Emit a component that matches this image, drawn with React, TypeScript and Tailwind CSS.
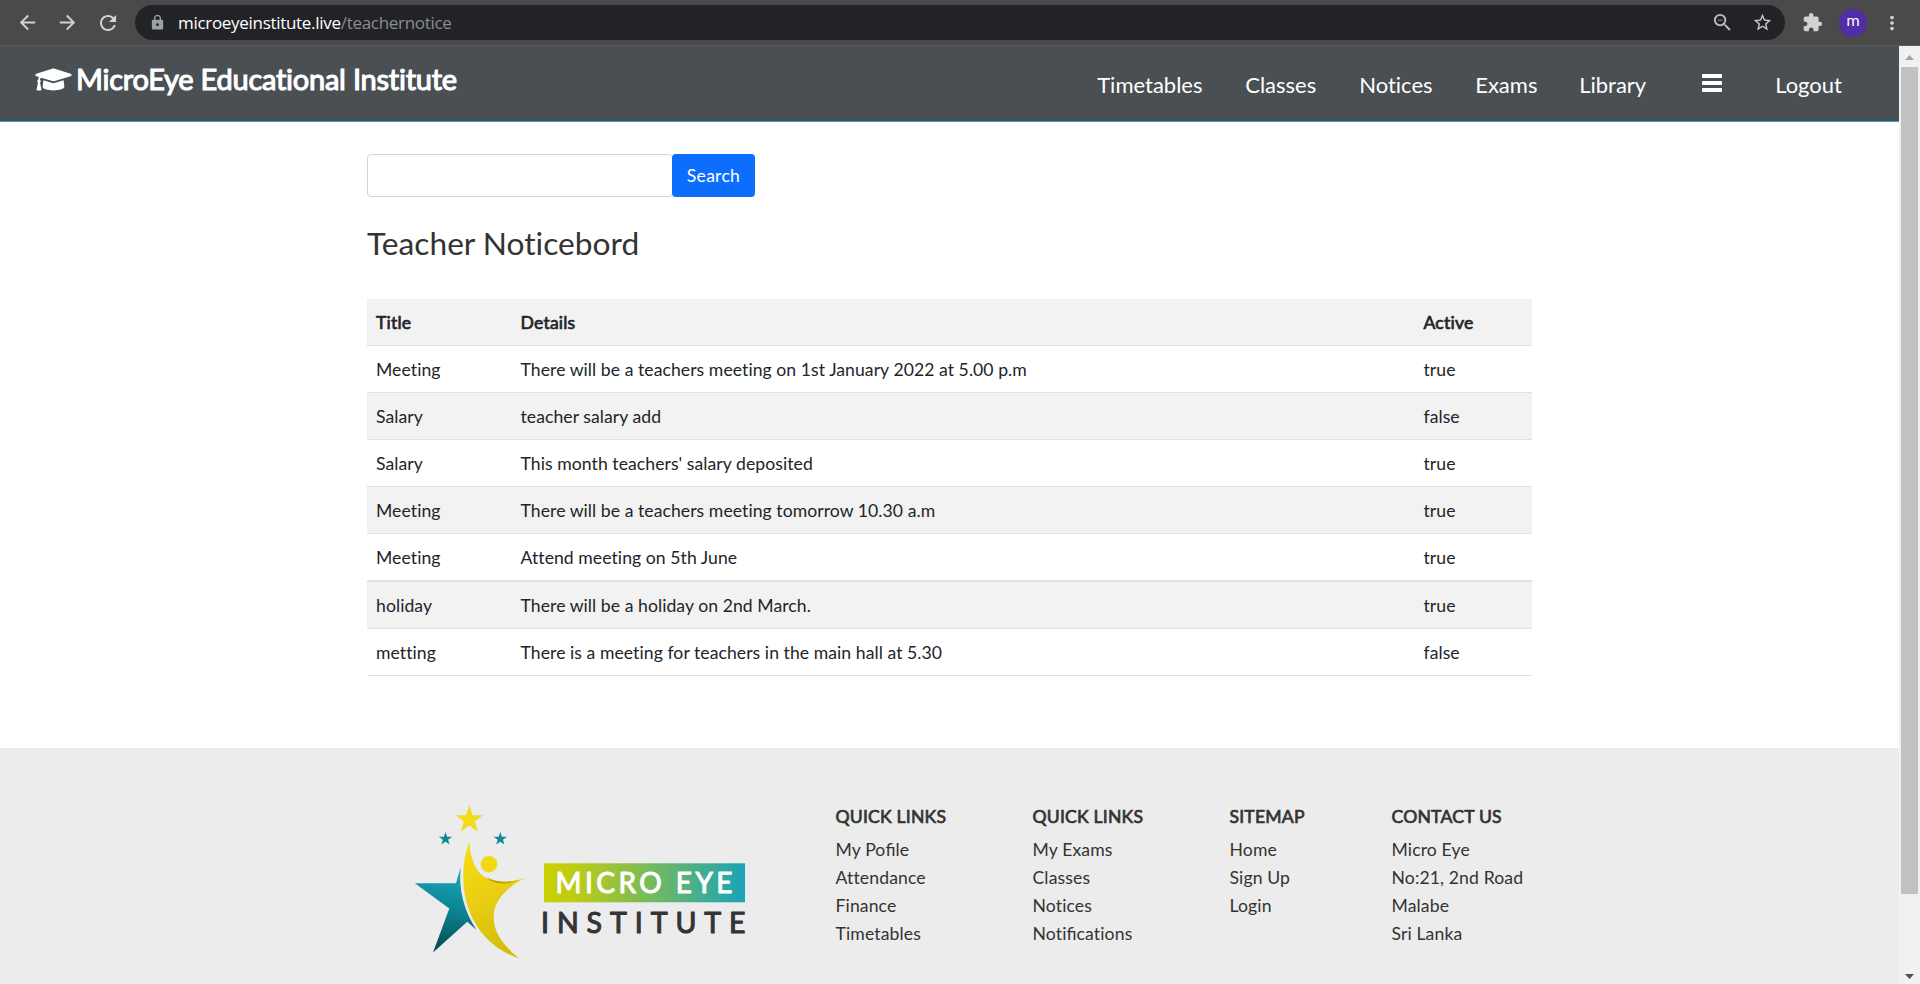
import { FaGraduationCap } from "react-icons/fa";
import { MdArrowBack, MdArrowForward, MdRefresh, MdLock, MdExtension, MdMoreVert, MdStarBorder, MdZoomOut } from "react-icons/md";

const navLinks = [
  { label: "Timetables", cls: "w-[148px]" },
  { label: "Classes", cls: "w-[114px]" },
  { label: "Notices", cls: "w-[116px]" },
  { label: "Exams", cls: "w-[104px]" },
  { label: "Library", cls: "w-[123px]" },
];

const notices = [
  ["Meeting", "There will be a teachers meeting on 1st January 2022 at 5.00 p.m", "true"],
  ["Salary", "teacher salary add", "false"],
  ["Salary", "This month teachers' salary deposited", "true"],
  ["Meeting", "There will be a teachers meeting tomorrow 10.30 a.m", "true"],
  ["Meeting", "Attend meeting on 5th June", "true"],
  ["holiday", "There will be a holiday on 2nd March.", "true"],
  ["metting", "There is a meeting for teachers in the main hall at 5.30", "false"],
];

const footerColumns = [
  { title: "QUICK LINKS", cls: "w-[197px]", items: ["My Pofile", "Attendance", "Finance", "Timetables"] },
  { title: "QUICK LINKS", cls: "w-[197px]", items: ["My Exams", "Classes", "Notices", "Notifications"] },
  { title: "SITEMAP", cls: "w-[162px]", items: ["Home", "Sign Up", "Login"] },
  { title: "CONTACT US", cls: "w-[180px]", items: ["Micro Eye", "No:21, 2nd Road", "Malabe", "Sri Lanka"] },
];

function BrowserBar() {
  return (
    <div className="flex h-[46px] shrink-0 items-center border-b border-[#5c5c5c] bg-[#4a4a4a] text-[#d2d2d2]">
      <MdArrowBack className="ml-[16px] size-[23px]" />
      <MdArrowForward className="ml-[17px] size-[23px]" />
      <MdRefresh className="ml-[17px] size-[24px]" />
      <div className="ml-[15px] flex h-[35px] w-[1650px] items-center rounded-full bg-[#222327] font-['Open_Sans',sans-serif] text-[17px]">
        <MdLock className="ml-[14px] size-[17px] text-[#9aa0a6]" />
        <span className="ml-[12px] tracking-[-0.3px] text-white">microeyeinstitute.live</span>
        <span className="tracking-[-0.3px] text-[#8b8d90]">/teachernotice</span>
        <MdZoomOut className="ml-auto size-[23px] text-[#bdbdbf]" />
        <MdStarBorder className="mr-[12px] ml-[18px] size-[21px] text-[#c8c8ca]" />
      </div>
      <MdExtension className="ml-[17px] size-[21px]" />
      <div className="ml-[16px] flex size-[28px] items-center justify-center rounded-full bg-[#512da8] pb-[3px] font-[Roboto,sans-serif] text-[15px] text-white">m</div>
      <MdMoreVert className="ml-[14px] size-[22px]" />
    </div>
  );
}

function Navbar() {
  return (
    <nav className="flex h-[76px] shrink-0 border-b border-[#2fa4b2] bg-[#4a4f53] text-white">
      <div className="flex h-[66px] items-center pl-[35px] text-[29px]">
        <FaGraduationCap className="h-[29px] w-[37px]" />
        <span className="ml-[4px] tracking-[-0.25px] [-webkit-text-stroke:1.1px_currentColor]">MicroEye Educational Institute</span>
      </div>
      <div className="ml-auto flex h-[76px] items-center pr-[57px] text-[22px]">
        {navLinks.map((l) => (
          <a key={l.label} className={l.cls}>{l.label}</a>
        ))}
        <svg className="mb-[3px] h-[18px] w-[20px]" viewBox="0 0 20 18" fill="currentColor">
          <rect width="20" height="4" rx="0.8" />
          <rect y="7" width="20" height="4" rx="0.8" />
          <rect y="14" width="20" height="4" rx="0.8" />
        </svg>
        <a className="ml-[53px]">Logout</a>
      </div>
    </nav>
  );
}

function NoticeTable() {
  return (
    <div className="mt-[37px] w-[1165px] text-[17.6px] leading-[28px] tracking-[0.06px] text-[#212529]">
      <div className="grid h-[47px] grid-cols-[144.5px_903px_1fr] items-center border-b border-[#dee2e6] bg-[#f2f2f2] pt-px pl-[9px] tracking-[0.2px] [-webkit-text-stroke:0.7px_currentColor]">
        <span>Title</span>
        <span>Details</span>
        <span>Active</span>
      </div>
      {notices.map((row, i) => (
        <div
          key={i}
          className={`grid grid-cols-[144.5px_903px_1fr] items-center border-[#dee2e6] pt-px pl-[9px] ${i % 2 ? "bg-[#f2f2f2]" : "bg-white"} ${i === 4 ? "h-[48px] border-b-2" : "h-[47px] border-b"}`}
        >
          <span>{row[0]}</span>
          <span>{row[1]}</span>
          <span>{row[2]}</span>
        </div>
      ))}
    </div>
  );
}

const STAR = "M0,-10 L2.35,-3.2 L9.5,-3.1 L3.8,1.2 L5.9,8.1 L0,4 L-5.9,8.1 L-3.8,1.2 L-9.5,-3.1 L-2.35,-3.2 Z";

function Logo() {
  return (
    <svg className="h-[160px] w-[340px] shrink-0" viewBox="410 800 340 160">
      <defs>
        <linearGradient id="band" x1="0" x2="1">
          <stop offset="0" stopColor="#cbd000" />
          <stop offset="0.18" stopColor="#b9cb1a" />
          <stop offset="1" stopColor="#1aa3b8" />
        </linearGradient>
        <linearGradient id="teal" x1="0.4" y1="0" x2="0.3" y2="1">
          <stop offset="0.1" stopColor="#189fb4" />
          <stop offset="0.5" stopColor="#0b828f" />
          <stop offset="1" stopColor="#02474e" />
        </linearGradient>
        <linearGradient id="gold" x1="0.2" y1="0" x2="0.5" y2="1">
          <stop offset="0" stopColor="#f6de10" />
          <stop offset="0.5" stopColor="#e8cd14" />
          <stop offset="1" stopColor="#d2bd06" />
        </linearGradient>
      </defs>
      <path d={STAR} transform="translate(469.3,819.8) scale(1.43)" fill="#f2db17" />
      <path d={STAR} transform="translate(445.5,838.9) scale(0.7)" fill="#12899a" />
      <path d={STAR} transform="translate(500.3,838.9) scale(0.7)" fill="#12899a" />
      <path d="M414.8,883.3 L456,883.3 L460.6,867.5 C458.5,890 464,911 476.5,930 L467.3,921.8 L433,952.6 L449.3,908.6 Z" fill="url(#teal)" />
      <path d="M469.5,842 C463,857 461.5,880 465.5,898 C471,925 490,949 519.5,958.5 C500,943 492,929 494,912 C496,898 511,884 526.5,877.5 C512,882 499,883.5 489,879.5 C476,874 470.5,860 469.5,842 Z" fill="url(#gold)" />
      <path d="M486,877.3 C497,882.8 509,882.5 518,880.2 C508,884.5 495,885.5 486,877.3 Z" fill="#b9a404" />
      <circle cx="489" cy="864.2" r="8.3" fill="#f0da14" />
      <rect x="544" y="863.3" width="201" height="39" fill="url(#band)" />
      <g fontFamily="Lato, sans-serif" strokeLinejoin="round">
        <text x="555.5" y="893.3" fontSize="28" fontWeight="400" fill="#fff" stroke="#fff" strokeWidth="1" textLength="177">MICRO EYE</text>
        <text x="541" y="932.8" fontSize="28.5" fontWeight="400" fill="#333435" stroke="#333435" strokeWidth="1.1" textLength="204.5">INSTITUTE</text>
      </g>
    </svg>
  );
}

function FooterLink({ text }: { text: string }) {
  return (
    <div>
      {text.split(/(fi)/).map((part, i) =>
        part === "fi" ? <span key={i} className="tracking-normal [font-variant-ligatures:normal]">{part}</span> : part
      )}
    </div>
  );
}

function Footer() {
  return (
    <footer className="mt-[72px] flex h-[236px] shrink-0 bg-[#ececec] pt-[52px] pl-[410px] text-[#333]">
      <Logo />
      <div className="ml-[85.5px] flex text-[17.6px] leading-[28px] tracking-[0.12px]">
        {footerColumns.map((c, i) => (
          <div key={i} className={c.cls}>
            <div className="mt-[3px] mb-[5px] tracking-[0.2px] [-webkit-text-stroke:0.7px_currentColor]">{c.title}</div>
            {c.items.map((t) => (
              <FooterLink key={t} text={t} />
            ))}
          </div>
        ))}
      </div>
    </footer>
  );
}

function Scrollbar() {
  return (
    <div className="flex w-[21px] shrink-0 flex-col items-center bg-[#f1f1f1]">
      <svg className="h-[21px] w-[21px]" viewBox="0 0 21 21"><path d="M6 14 L10.5 9 L15 14 Z" fill="#a3a3a3" /></svg>
      <div className="h-[827px] w-[17px] bg-[#c1c1c1]" />
      <svg className="mt-auto h-[21px] w-[21px]" viewBox="0 0 21 21"><path d="M6 11 L10.5 16 L15 11 Z" fill="#505050" /></svg>
    </div>
  );
}

export default function App() {
  return (
    <div className="flex h-[984px] w-[1920px] flex-col overflow-hidden bg-white font-[Lato,sans-serif] [font-variant-ligatures:none]">
      <BrowserBar />
      <div className="flex min-h-0 flex-1">
        <div className="flex w-[1899px] flex-col">
          <Navbar />
          <main className="pl-[367px]">
            <div className="mt-[32px] flex h-[43px] text-[17.6px]">
              <input className="w-[306px] rounded-[4px] border border-[#ced4da] bg-white" />
              <button className="z-10 -ml-px w-[83px] rounded-[4px] bg-[#0d6efd] pt-px tracking-[0.25px] text-white">Search</button>
            </div>
            <h1 className="mt-[27px] h-[38px] text-[31.7px] leading-[38px] text-[#333]">Teacher Noticebord</h1>
            <NoticeTable />
          </main>
          <Footer />
        </div>
        <Scrollbar />
      </div>
    </div>
  );
}
